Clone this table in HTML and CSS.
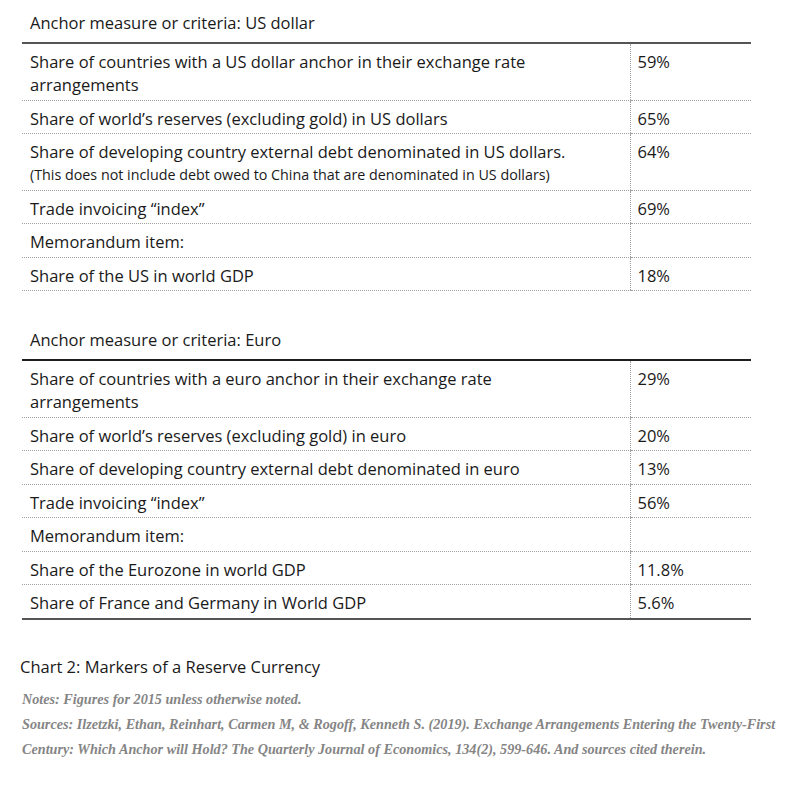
FILE: index.html
```html
<!DOCTYPE html>
<html>
<head>
<meta charset="utf-8">
<link rel="stylesheet" href="styles.css">
</head>
<body>
<div class="page">
  <table class="anchor">
    <colgroup><col class="c-label"><col class="c-val"></colgroup>
    <thead>
      <tr><th colspan="2">Anchor measure or criteria: US dollar</th></tr>
    </thead>
    <tbody>
      <tr><td class="label">Share of countries with a US dollar anchor in their exchange rate arrangements</td><td class="val">59%</td></tr>
      <tr><td class="label">Share of world’s reserves (excluding gold) in US dollars</td><td class="val">65%</td></tr>
      <tr><td class="label">Share of developing country external debt denominated in US dollars.<span class="small">(This does not include debt owed to China that are denominated in US dollars)</span></td><td class="val">64%</td></tr>
      <tr><td class="label">Trade invoicing “index”</td><td class="val">69%</td></tr>
      <tr><td class="label">Memorandum item:</td><td class="val"></td></tr>
      <tr><td class="label">Share of the US in world GDP</td><td class="val">18%</td></tr>
    </tbody>
  </table>

  <table class="anchor second">
    <colgroup><col class="c-label"><col class="c-val"></colgroup>
    <thead>
      <tr><th colspan="2">Anchor measure or criteria: Euro</th></tr>
    </thead>
    <tbody>
      <tr><td class="label">Share of countries with a euro anchor in their exchange rate arrangements</td><td class="val">29%</td></tr>
      <tr><td class="label">Share of world’s reserves (excluding gold) in euro</td><td class="val">20%</td></tr>
      <tr><td class="label">Share of developing country external debt denominated in euro</td><td class="val">13%</td></tr>
      <tr><td class="label">Trade invoicing “index”</td><td class="val">56%</td></tr>
      <tr><td class="label">Memorandum item:</td><td class="val"></td></tr>
      <tr><td class="label">Share of the Eurozone in world GDP</td><td class="val">11.8%</td></tr>
      <tr class="last"><td class="label">Share of France and Germany in World GDP</td><td class="val">5.6%</td></tr>
    </tbody>
  </table>

  <h2 class="caption">Chart 2: Markers of a Reserve Currency</h2>
  <p class="note">Notes: Figures for 2015 unless otherwise noted.</p>
  <p class="note">Sources: Ilzetzki, Ethan, Reinhart, Carmen M, &amp; Rogoff, Kenneth S. (2019). Exchange Arrangements Entering the Twenty-First Century: Which Anchor will Hold? The Quarterly Journal of Economics, 134(2), 599-646. And sources cited therein.</p>
</div>
</body>
</html>
```

FILE: styles.css
```css
html, body {
  margin: 0;
  padding: 0;
  background: #ffffff;
}

.page {
  padding: 0 0 0 20px;
  font-family: "Open Sans", "Noto Sans", sans-serif;
  color: #1a1a1a;
}

.anchor {
  width: 729px;
  margin-left: 2px;
  border-collapse: collapse;
  table-layout: fixed;
  font-size: 16.5px;
  line-height: 23px;
}

.anchor col.c-label {
  width: 608px;
}

.anchor col.c-val {
  width: 121px;
}

.anchor.second {
  margin-top: 26px;
}

.anchor th {
  text-align: left;
  font-weight: normal;
  height: 43px;
  padding: 2px 8px 0 8px;
  box-sizing: border-box;
  border-bottom: 2px solid #555555;
  vertical-align: middle;
}

.anchor.second th {
  border-bottom-color: #1e1e1e;
}

.anchor td {
  padding: 6px 0 3.5px 0;
  border-bottom: 1px dotted #a0a0a0;
  vertical-align: top;
}

.anchor td.label {
  padding-left: 8px;
  padding-right: 52px;
}

.anchor td.val {
  padding-left: 7px;
  border-left: 1px dotted #a0a0a0;
}

.anchor tr.last td {
  border-bottom: 2px solid #555555;
}

.small {
  display: block;
  font-size: 14.3px;
  line-height: 23px;
}

.caption {
  margin: 33px 0 0 0;
  font-size: 16.5px;
  font-weight: normal;
  line-height: 28px;
  color: #1a1a1a;
}

.note {
  margin: 6px 0 0 2px;
  width: 775px;
  font-family: "Liberation Serif", "Times New Roman", serif;
  font-style: italic;
  font-weight: bold;
  font-size: 14.2px;
  line-height: 25px;
  color: #858585;
}

.note + .note {
  margin-top: 0;
}
```
